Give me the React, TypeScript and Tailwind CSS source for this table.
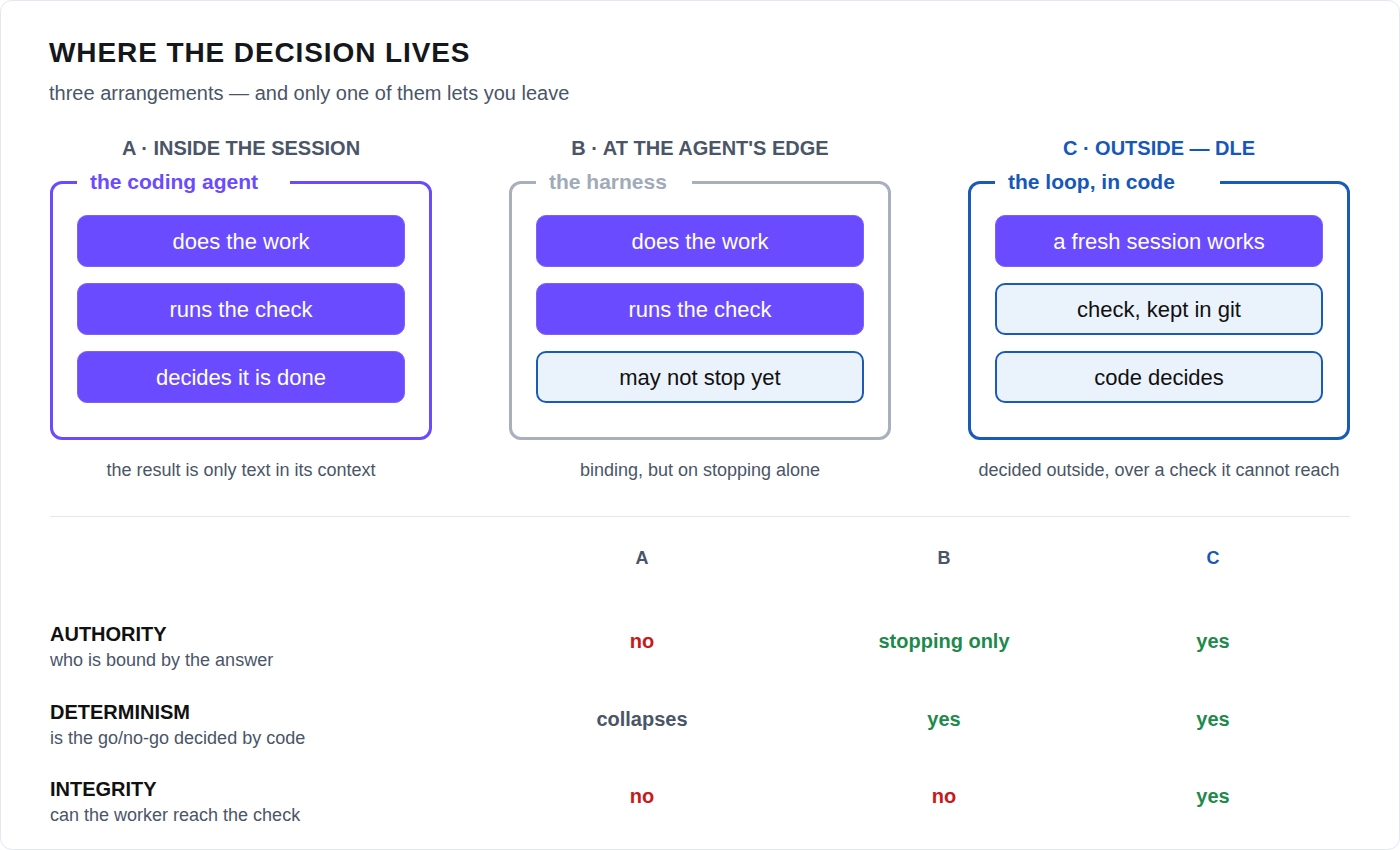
import React from "react";

const PURPLE = "bg-[#6b4bff]";

type Item = { text: string; kind: "p" | "l" };

function Panel({
  heading,
  headingClass,
  legend,
  legendClass,
  legendWidth,
  borderClass,
  items,
  caption,
}: {
  heading: string;
  headingClass: string;
  legend: string;
  legendClass: string;
  legendWidth: string;
  borderClass: string;
  items: Item[];
  caption: string;
}) {
  return (
    <div className="flex flex-col items-center">
      <div className={`text-[20px] leading-[26px] font-bold ${headingClass}`}>{heading}</div>
      <fieldset className={`mt-[8px] w-full border-[3px] rounded-[12px] px-[24px] pb-[34px] ${borderClass}`}>
        <legend className={`pl-[13px] text-[21px] leading-[26px] font-bold ${legendClass} ${legendWidth}`}>
          {legend}
        </legend>
        <div className="mt-[20px] flex flex-col gap-[16px]">
          {items.map((it, i) =>
            it.kind === "p" ? (
              <div
                key={i}
                className={`h-[52px] rounded-[10px] ${PURPLE} border border-[#7d62ff] flex items-center justify-center text-white text-[22px]`}
              >
                {it.text}
              </div>
            ) : (
              <div
                key={i}
                className="h-[52px] rounded-[10px] bg-[#eaf2fb] border-[2.5px] border-[#1a5bb8] flex items-center justify-center text-[#111] text-[22px]"
              >
                {it.text}
              </div>
            )
          )}
        </div>
      </fieldset>
      <div className="mt-[18px] text-[18px] leading-[24px] text-[#4a5568]">{caption}</div>
    </div>
  );
}

const rows = [
  {
    label: "AUTHORITY",
    sub: "who is bound by the answer",
    vals: [
      { t: "no", c: "text-[#c81a1a]" },
      { t: "stopping only", c: "text-[#1d8a4c]" },
      { t: "yes", c: "text-[#1d8a4c]" },
    ],
  },
  {
    label: "DETERMINISM",
    sub: "is the go/no-go decided by code",
    vals: [
      { t: "collapses", c: "text-[#4a5568]" },
      { t: "yes", c: "text-[#1d8a4c]" },
      { t: "yes", c: "text-[#1d8a4c]" },
    ],
  },
  {
    label: "INTEGRITY",
    sub: "can the worker reach the check",
    vals: [
      { t: "no", c: "text-[#c81a1a]" },
      { t: "no", c: "text-[#c81a1a]" },
      { t: "yes", c: "text-[#1d8a4c]" },
    ],
  },
];

export default function App() {
  return (
    <div
      className="w-[1400px] h-[850px] bg-white"
      style={{ fontFamily: '"Liberation Sans", Arial, sans-serif' }}
    >
      <div className="h-full border border-[#e2e8f0] rounded-[12px] px-[49px] pt-[35px]">
        <h1 className="-ml-[1px] text-[28px] leading-[34px] font-bold tracking-[0.9px] text-[#15171c]">
          WHERE THE DECISION LIVES
        </h1>
        <p className="-ml-[1px] mt-[10px] text-[20px] leading-[26px] text-[#4a5568]">
          three arrangements — and only one of them lets you leave
        </p>

        <div className="mt-[29px] grid grid-cols-[382px_382px_382px] gap-x-[77px]">
          <Panel
            heading="A · INSIDE THE SESSION"
            headingClass="text-[#4a5568]"
            legend="the coding agent"
            legendClass="text-[#6b4bff]"
            legendWidth="w-[213px]"
            borderClass="border-[#6b4bff]"
            items={[
              { text: "does the work", kind: "p" },
              { text: "runs the check", kind: "p" },
              { text: "decides it is done", kind: "p" },
            ]}
            caption="the result is only text in its context"
          />
          <Panel
            heading="B · AT THE AGENT'S EDGE"
            headingClass="text-[#4a5568]"
            legend="the harness"
            legendClass="text-[#a0aab8]"
            legendWidth="w-[156px]"
            borderClass="border-[#a7b0bc]"
            items={[
              { text: "does the work", kind: "p" },
              { text: "runs the check", kind: "p" },
              { text: "may not stop yet", kind: "l" },
            ]}
            caption="binding, but on stopping alone"
          />
          <Panel
            heading="C · OUTSIDE — DLE"
            headingClass="text-[#1558b8]"
            legend="the loop, in code"
            legendClass="text-[#1558b8]"
            legendWidth="w-[225px]"
            borderClass="border-[#1a5bb8]"
            items={[
              { text: "a fresh session works", kind: "p" },
              { text: "check, kept in git", kind: "l" },
              { text: "code decides", kind: "l" },
            ]}
            caption="decided outside, over a check it cannot reach"
          />
        </div>

        <div className="mt-[34px] h-px bg-[#e2e8f0]" />

        <div className="grid grid-cols-[441px_302px_302px_236px] text-[18px] leading-[24px] font-bold">
          <div className="mt-[29px]" />
          <div className="mt-[29px] text-center text-[#4a5568]">A</div>
          <div className="mt-[29px] text-center text-[#4a5568]">B</div>
          <div className="mt-[29px] text-center text-[#1558b8]">C</div>
        </div>

        <div className="mt-[52px] flex flex-col gap-[28.5px]">
          {rows.map((r) => (
            <div key={r.label} className="grid grid-cols-[441px_302px_302px_236px] items-start">
              <div>
                <div className="text-[20px] leading-[24px] font-bold text-[#111]">{r.label}</div>
                <div className="mt-[3px] text-[18px] leading-[22px] text-[#4a5568]">{r.sub}</div>
              </div>
              {r.vals.map((v, i) => (
                <div key={i} className={`mt-[7px] text-center text-[20px] leading-[24px] font-bold ${v.c}`}>
                  {v.t}
                </div>
              ))}
            </div>
          ))}
        </div>
      </div>
    </div>
  );
}
